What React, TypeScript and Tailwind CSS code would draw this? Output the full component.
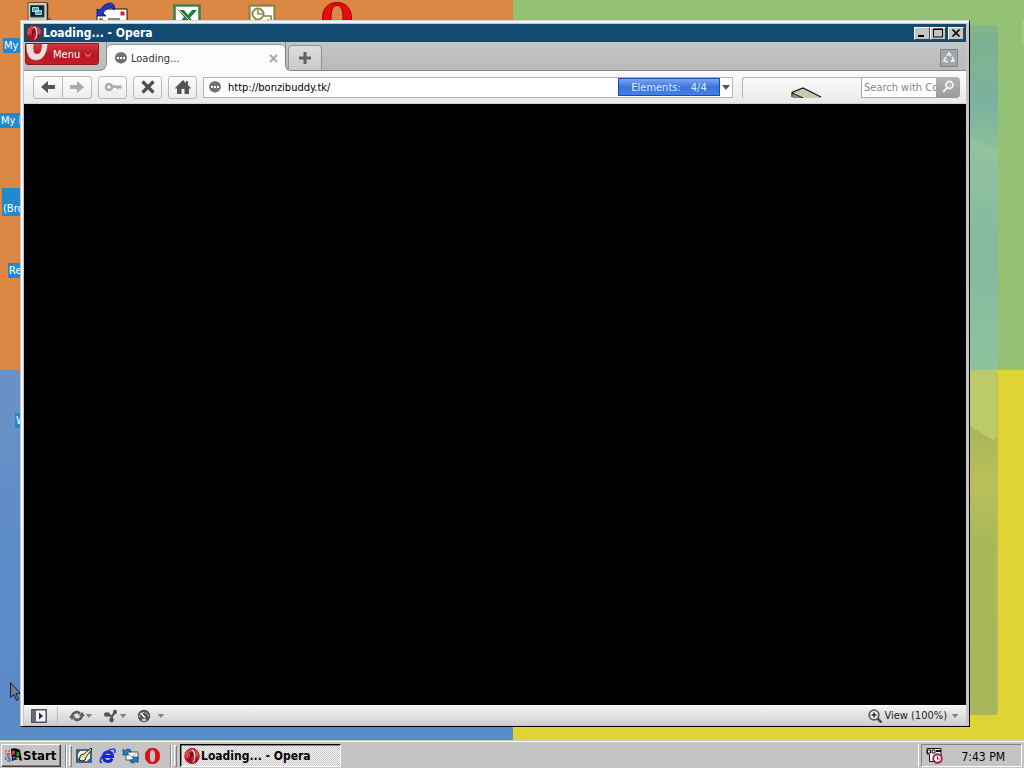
import type { ReactNode } from "react";

const ui = "font-['DejaVu_Sans_Condensed','DejaVu_Sans',sans-serif]";

function OperaO({ className }: { className: string }) {
  return (
    <svg viewBox="0 0 16 16" className={className} aria-hidden="true">
      <ellipse cx="8" cy="8" rx="7.7" ry="7.9" fill="#a5101a" />
      <path d="M1.500 5Q4 .5 8 .5q-3 2-3.500 7T2 10Q.5 8 1.500 5Z" fill="#dd4a4e" />
      <path d="M10 1q4 1 5 5l-1 4-2-2Q12 3 10 1Z" fill="#d44" />
      <ellipse cx="8.500" cy="8" rx="3" ry="6.400" fill="#f5e4e4" />
      <ellipse cx="7.800" cy="8.500" rx="2.200" ry="5.800" fill="#8c0a13" />
      <path d="M7 11l1.500-4 1 2-1 4Z" fill="#d5202a" />
    </svg>
  );
}

function OperaRing({ className }: { className: string }) {
  return (
    <svg viewBox="0 0 30 32" className={className} aria-hidden="true">
      <path
        fillRule="evenodd"
        d="M15 .5C6 .5 .5 7 .5 16S6 31.500 15 31.500 29.500 25 29.500 16 24 .5 15 .5ZM15 3.500c4.500 0 6 5 6 12.500s-1.500 12.500-6 12.500S9 23.500 9 16s1.500-12.500 6-12.500Z"
        fill="#e80c0c"
        stroke="#8e0404"
        strokeWidth="1"
      />
    </svg>
  );
}

function Bubble({ className }: { className: string }) {
  return (
    <svg viewBox="0 0 12 12" className={className} aria-hidden="true">
      <path d="M6 .3C9.800 .3 11.900 2.600 11.900 5.800S9.500 11 7 11.200L6 12l-1-.8C2.200 11 .1 9 .1 5.800S2.200.3 6 .3Z" fill="#727274" />
      <path d="M2 5h2v2H2zM5 5h2v2H5zM8 5h2v2H8z" fill="#fff" />
    </svg>
  );
}

function Caret({ className }: { className: string }) {
  return (
    <svg viewBox="0 0 8 5" className={className} aria-hidden="true">
      <path d="M0 0h8L4 5Z" fill="currentColor" />
    </svg>
  );
}

function Wallpaper() {
  return (
    <svg className="absolute inset-0 h-full w-full" viewBox="0 0 1024 740" preserveAspectRatio="none" aria-hidden="true">
      <defs>
        <linearGradient id="blue" x1="0" y1="0" x2="0" y2="1">
          <stop offset="0" stopColor="#6b92c6" />
          <stop offset="0.5" stopColor="#5c8bc8" />
          <stop offset="1" stopColor="#598bc8" />
        </linearGradient>
        <linearGradient id="panel" x1="0" y1="0" x2="0" y2="1">
          <stop offset="0" stopColor="#84b58c" />
          <stop offset="0.15" stopColor="#7baf92" />
          <stop offset="0.3" stopColor="#80b391" />
          <stop offset="0.6" stopColor="#79b1a0" />
          <stop offset="1" stopColor="#8fbf98" />
        </linearGradient>
        <linearGradient id="teal" x1="0" y1="0" x2="0" y2="1">
          <stop offset="0" stopColor="#94c3a0" />
          <stop offset="0.5" stopColor="#84b99f" />
          <stop offset="1" stopColor="#90c29d" />
        </linearGradient>
        <linearGradient id="olive" x1="0" y1="0" x2="0" y2="1">
          <stop offset="0" stopColor="#acb65a" />
          <stop offset="0.18" stopColor="#a9b657" />
          <stop offset="0.32" stopColor="#bac05b" />
          <stop offset="0.5" stopColor="#a8b859" />
          <stop offset="1" stopColor="#a9b65b" />
        </linearGradient>
      </defs>
      <path d="M0 0h513v370H0z" fill="#dc8844" />
      <path d="M513 0h511v370H513z" fill="#94c274" />
      <path d="M0 370h513v370H0z" fill="url(#blue)" />
      <path d="M513 370h511v370H513z" fill="#e0d434" />
      <path d="M1022 20h2v25h-2z" fill="#a3cb7d" />
      <path d="M960 25h34q4 0 4 4v121l-38-16z" fill="url(#panel)" />
      <path d="M960 134l38 16v220h-38z" fill="url(#teal)" />
      <path d="M960 370h38v340q0 5-4 5h-34z" fill="url(#olive)" />
      <path d="M960 370h38v65l-5 5-33-20z" fill="#bdca69" />
      <path d="M997 374v336" stroke="#c9b856" strokeWidth="1" />
    </svg>
  );
}

function DesktopIcons() {
  const label = `${ui} absolute bg-[#2389cf] text-[11px] leading-[15px] text-white whitespace-nowrap`;
  return (
    <>
      <svg className="absolute left-[27px] top-[2px] h-6 w-6" viewBox="0 0 24 24" aria-hidden="true">
        <path d="M1 .5h19.500v18H1z" fill="#d0ccb9" stroke="#57554c" />
        <path d="M20.500 1v18" stroke="#222" strokeWidth="1.500" />
        <path d="M3.500 3.500h13.500v11.500h-13.500z" fill="#08232f" stroke="#33555c" />
        <path d="M5 5h7v5H5zM8 8h7v5H8z" fill="#0a1a20" />
        <path d="M5.500 5.500h6v4h-6zM8.500 8.500h6v4h-6z" fill="#5c9fb4" stroke="#a6dcea" />
        <path d="M21 17h3v3" stroke="#333" fill="none" />
      </svg>
      <svg className="absolute left-[96px] top-[2px] h-6 w-8" viewBox="0 0 32 24" aria-hidden="true">
        <path d="M8 7h23v16H1V14z" fill="#fff" stroke="#111" />
        <path d="M24.500 9.500h4v4h-4z" fill="#d82020" />
        <path d="M12 17h12M3 17h4" stroke="#111" />
        <path d="M1 7v7h9l-3-3q3-5 8-6l3 3Q20 1 13 1 8 2 4 8Z" fill="#1c38d0" stroke="#061060" strokeWidth=".8" />
      </svg>
      <svg className="absolute left-[173px] top-[4px] h-6 w-7" viewBox="0 0 28 24" aria-hidden="true">
        <path d="M1.500 1.500h25v22h-25z" fill="#fff" stroke="#3d8249" strokeWidth="2.600" />
        <path d="M5 6h6l4 5 4-5h5l-7 8 6 7h-6l-4-5-4 5H4l7-8Z" fill="#277c3a" />
        <path d="M5 5l14 14" stroke="#fff" strokeWidth=".8" />
      </svg>
      <svg className="absolute left-[248px] top-[4px] h-6 w-7" viewBox="0 0 28 24" aria-hidden="true">
        <path d="M1.500 1.500h25v22h-25z" fill="#fff" stroke="#8f8748" strokeWidth="2.400" />
        <circle cx="10" cy="10" r="5.500" fill="#fff" stroke="#8f8748" strokeWidth="2" />
        <path d="M10 6v4h4M16 12h7v7h-3v-4" stroke="#8f8748" strokeWidth="1.600" fill="none" />
      </svg>
      <OperaRing className="absolute left-[322px] top-[2px] h-8 w-[30px]" />
      <span className={`${label} left-[3px] top-[38px] w-[30px] px-px`}>My</span>
      <span className={`${label} left-0 top-[113px] w-[30px] px-px`}>My D</span>
      <span className={`${label} left-[2px] top-[188px] w-[30px] px-px pt-[13px]`}>(Bro</span>
      <span className={`${label} left-[8px] top-[263px] w-[30px] px-px`}>Re</span>
      <span className={`${label} left-[15px] top-[413px] w-[30px] px-px`}>W</span>
    </>
  );
}

const raised = "border border-t-white border-l-white border-r-[#404040] border-b-[#404040] bg-[#c5c4c4]";

function TitleBar() {
  const box = `${raised} flex h-[13px] w-4 items-center justify-center`;
  return (
    <header className="flex h-[18px] shrink-0 items-center bg-[#124a71] px-0.5">
      <OperaO className="h-4 w-4" />
      <h1 className={`${ui} ml-px flex-1 text-[12px] leading-[16px] font-bold text-white`}>Loading... - Opera</h1>
      <button className={box} aria-label="Minimize">
        <svg viewBox="0 0 12 10" className="h-[10px] w-3"><path d="M2 7h6v2H2z" /></svg>
      </button>
      <button className={box} aria-label="Maximize">
        <svg viewBox="0 0 12 10" className="h-[10px] w-3"><path d="M1.500 1h9v8h-9zM1 1.500h10" fill="none" stroke="#000" /></svg>
      </button>
      <button className={`${box} ml-0.5`} aria-label="Close">
        <svg viewBox="0 0 12 10" className="h-[10px] w-3"><path d="M2.500 1.500l7 7M9.500 1.500l-7 7" stroke="#000" strokeWidth="1.700" /></svg>
      </button>
    </header>
  );
}

function TabBar() {
  return (
    <div className="flex h-[29px] shrink-0 bg-[#fcfcfc]">
      <div className="flex w-[83px] items-start rounded-br-lg border-r border-b border-[#8b8b8b] bg-linear-to-b from-[#c4c4c4] to-[#bdbdbd] pl-px pt-px">
        <button className={`${ui} flex h-[22px] w-[74px] items-start overflow-hidden rounded-b-[3px] border border-[#8e1820] bg-linear-to-b from-[#cf3b43] via-[#b91722] to-[#c31d29] text-[11px] leading-[22px] text-white`}>
          <svg viewBox="0 0 24 20" className="h-5 w-6 shrink-0" aria-hidden="true">
            <path d="M0 0Q0 16.500 10 16.500T22 0h-6q0 10-5 10T7.500 0Z" fill="#e9dfdf" />
            <path d="M0 0Q0 16.500 10 16.500T22 0" fill="none" stroke="#9b3339" strokeWidth=".6" />
          </svg>
          <span className="ml-[3px]">Menu</span>
          <svg viewBox="0 0 8 5" className="mt-[9px] ml-1 h-[5px] w-2" aria-hidden="true"><path d="M1 .5l3 3 3-3" fill="none" stroke="#f3b4b7" /></svg>
        </button>
      </div>
      <div className="w-[178px] bg-linear-to-b from-[#c4c4c4] from-40% to-[#fcfcfc] to-40% pt-0.5">
        <div className={`${ui} flex h-full items-center rounded-t-[5px] border-t border-[#969696] bg-[#fcfcfc] pr-[7px] pl-2 text-[11px] leading-4 text-[#333]`}>
          <Bubble className="h-3 w-3" />
          <span className="ml-1 flex-1 pt-px">Loading...</span>
          <button aria-label="Close tab">
            <svg viewBox="0 0 9 9" className="h-[9px] w-[9px]"><path d="M1 1l7 7M8 1L1 8" stroke="#a4a4a4" strokeWidth="1.800" /></svg>
          </button>
        </div>
      </div>
      <div className="flex flex-1 justify-between rounded-bl-md border-b border-l border-[#858585] bg-linear-to-b from-[#c4c4c4] to-[#bababa] pl-0.5">
        <button aria-label="New tab" className="mt-[3px] flex h-[25px] w-[34px] items-center justify-center rounded-t-[4px] border border-b-0 border-[#919191] bg-linear-to-b from-[#dedede] to-[#c9c9c9]">
          <svg viewBox="0 0 12 12" className="h-3 w-3"><path d="M4.500 0h3v4.500H12v3H7.500V12h-3V7.500H0v-3h4.500Z" fill="#616166" /></svg>
        </button>
        <button aria-label="Closed tabs" className="mt-[7px] mr-2 flex h-[18px] w-[18px] items-center justify-center border border-[#7b858a] bg-[#9da7ac]">
          <svg viewBox="0 0 12 12" className="h-3 w-3"><path d="M4 4l2-3 2 3M9 5l2 4H8M5 10L1 9l2-4" fill="none" stroke="#edf2f2" strokeWidth="1.800" strokeLinejoin="round" /></svg>
        </button>
      </div>
    </div>
  );
}

function ToolButton({ label, className, children }: { label: string; className: string; children: ReactNode }) {
  return (
    <button aria-label={label} className={`flex h-[23px] items-center justify-center border border-[#b9b9b9] bg-linear-to-b from-white to-[#ececec] ${className}`}>
      {children}
    </button>
  );
}

function AddressBar() {
  const icon = "h-4 w-4";
  return (
    <div className="flex h-[33px] shrink-0 items-center border-b border-[#d2d2d2] bg-linear-to-b from-[#fcfcfc] to-[#e9e9e9] pr-1.5 pl-[9px]">
      <ToolButton label="Back" className="w-[30px] rounded-l-[3px]">
        <svg viewBox="0 0 16 16" className={icon}><path d="M1 8l7-6v4h7v4H8v4Z" fill="#555558" /></svg>
      </ToolButton>
      <ToolButton label="Forward" className="-ml-px w-[30px] rounded-r-[3px]">
        <svg viewBox="0 0 16 16" className={icon}><path d="M15 8L8 2v4H1v4h7v4Z" fill="#aaaaac" /></svg>
      </ToolButton>
      <ToolButton label="Password" className="ml-1.5 w-[29px] rounded-[3px]">
        <svg viewBox="0 0 18 12" className="h-3 w-[18px]">
          <circle cx="5" cy="6" r="3" fill="none" stroke="#aaa" strokeWidth="2.600" />
          <path d="M8 4.500h9l1 1.500-1.500 2-1.500-1-1 2-1.500-2H8Z" fill="#aaa" />
        </svg>
      </ToolButton>
      <ToolButton label="Stop" className="ml-1.5 w-[29px] rounded-[3px]">
        <svg viewBox="0 0 16 16" className={icon}><path d="M2.500 2.500l11 11M13.500 2.500l-11 11" stroke="#505053" strokeWidth="3.200" /></svg>
      </ToolButton>
      <ToolButton label="Home" className="ml-1.5 w-[29px] rounded-[3px]">
        <svg viewBox="0 0 16 16" className={icon}><path d="M8 1l3 3V2h2v4l3 3-1 1-1-1v6H9.500v-5h-3v5H2V9l-1 1-1-1Z" fill="#555558" /></svg>
      </ToolButton>
      <div className="ml-1.5 flex h-[21px] w-[530px] items-center border border-[#b2b2b2] bg-white pl-[5px]">
        <Bubble className="h-3 w-3 shrink-0" />
        <input aria-label="Address" defaultValue="http://bonzibuddy.tk/" className={`${ui} ml-[7px] min-w-0 flex-1 pt-0.5 text-[11px] leading-4 text-black outline-none`} />
        <div className={`${ui} flex h-[18px] w-[102px] shrink-0 items-center justify-center gap-2.5 border border-[#184baa] bg-linear-to-b from-[#7aa8f2] via-[#3d72df] to-[#4381e8] pt-0.5 text-[11px] leading-4 text-[#d8f1ff]`}>
          <span>Elements:</span>
          <span>4/4</span>
        </div>
        <button aria-label="Address history" className="flex w-3 shrink-0 justify-center text-[#555]"><Caret className="h-[5px] w-2" /></button>
      </div>
      <div className="ml-[9px] flex h-[21px] flex-1 items-end rounded-tl-[3px] border-t border-l border-[#b5b5b5] bg-linear-to-b from-[#fafafa] to-[#ededed] pl-12">
        <svg viewBox="0 0 32 11" className="h-[11px] w-8" aria-hidden="true">
          <path d="M1 11V5L12 1l18 9v1H1" fill="#ccc9b0" />
          <path d="M1 10V5.500L12 1l18 9M1 6l11 5" fill="none" stroke="#151510" strokeWidth="1.200" />
          <path d="M2 7l9 4H2Z" fill="#8b8979" />
        </svg>
      </div>
      <input aria-label="Search" placeholder="Search with Co" className={`${ui} h-[21px] w-[75px] border border-r-0 border-[#aaa] bg-white pl-0.5 text-[11px] text-[#777] outline-none placeholder:text-[#858585]`} />
      <button aria-label="Search" className="flex h-[21px] w-6 items-center justify-center rounded-r-[4px] bg-linear-to-b from-[#b5b5b5] to-[#999]">
        <svg viewBox="0 0 14 14" className="h-[14px] w-[14px]"><circle cx="8.500" cy="5" r="3.500" fill="#b5b5b5" stroke="#f1f1f1" strokeWidth="1.800" /><path d="M6 8l-4 4" stroke="#f1f1f1" strokeWidth="2" /></svg>
      </button>
    </div>
  );
}

function StatusBar() {
  return (
    <footer className={`${ui} flex h-5 shrink-0 items-center border-t border-white bg-linear-to-b from-[#f3f3f3] to-[#cfcfcf] px-[7px] text-[11px] leading-4 text-[#222]`}>
      <button aria-label="Panels">
        <svg viewBox="0 0 16 14" className="h-[14px] w-4"><path d="M.8.8h14.400v12.400H.8Z" fill="#f6f6f6" stroke="#4c505a" strokeWidth="1.500" /><path d="M1 1h4v12H1Z" fill="#646976" /><path d="M8 3.500v7l4-3.500Z" fill="#222d4a" /></svg>
      </button>
      <span className="ml-2.5 h-full w-px bg-[#bcbcbc]" />
      <button aria-label="Synchronize" className="ml-[11px] flex items-center text-[#808080]">
        <svg viewBox="0 0 16 12" className="h-3 w-4"><path d="M3 6Q4 2 9 2l2 2M13 6q-1 4-6 4L5 8" fill="none" stroke="#555f5d" strokeWidth="2.600" /><path d="M0 6h6L3 10ZM16 6h-6l3-4Z" fill="#555f5d" /></svg>
        <Caret className="h-1 w-2" />
      </button>
      <button aria-label="Unite" className="ml-2.5 flex items-center text-[#808080]">
        <svg viewBox="0 0 16 14" className="h-[14px] w-4">
          <path d="M10 7q0-2 2-4M8 11l1-4-5-1" stroke="#505456" strokeWidth="2" fill="none" />
          <ellipse cx="4" cy="5.500" rx="3" ry="2.200" fill="#505456" />
          <ellipse cx="12" cy="3" rx="2" ry="2.300" fill="#505456" />
          <ellipse cx="8.500" cy="11" rx="2.300" ry="2.400" fill="#505456" />
        </svg>
        <Caret className="h-1 w-2" />
      </button>
      <button aria-label="Turbo" className="ml-2.5 flex items-center text-[#808080]">
        <svg viewBox="0 0 14 14" className="h-[14px] w-[14px]"><circle cx="7" cy="7" r="6.200" fill="#505661" /><path d="M2.500 8A4.500 4.500 0 0 1 11.500 8" fill="none" stroke="#d2d5db" strokeWidth="1.200" strokeDasharray="1.600 1.200" /><path d="M4 4l4 5M5 11h4" stroke="#fff" strokeWidth="1.500" /></svg>
        <Caret className="ml-1.5 h-1 w-2" />
      </button>
      <button className="ml-auto flex items-center whitespace-nowrap">
        <svg viewBox="0 0 14 14" className="mr-0.5 h-[14px] w-[14px]" aria-hidden="true"><circle cx="6" cy="6" r="4.800" fill="#eef0f2" stroke="#575d65" strokeWidth="1.800" /><path d="M9.500 9.500l4 4" stroke="#474d55" strokeWidth="2.600" /><path d="M3.500 6h5M6 3.500v5" stroke="#333" strokeWidth="1.600" /></svg>
        <span className="pt-px">View (100%)</span>
        <Caret className="ml-1 h-1 w-2 text-[#808080]" />
      </button>
    </footer>
  );
}

function BrowserWindow() {
  return (
    <section className="absolute top-5 right-[54px] bottom-[13px] left-5 flex flex-col border border-t-[#d8d8d0] border-r-black border-b-black border-l-[#c6c6c6] bg-[#c5c4c4]">
      <div className="flex min-h-0 flex-1 flex-col border-t-2 border-l-2 border-t-[#f3f3f3] border-l-[#f3f3f3] pt-px pr-[3px] pb-px pl-px">
        <TitleBar />
        <TabBar />
        <AddressBar />
        <main className="min-h-0 flex-1 bg-black" />
        <StatusBar />
      </div>
    </section>
  );
}

function Grip() {
  return (
    <span className="flex h-[22px] gap-0.5" aria-hidden="true">
      <span className="w-0.5 border-r border-l border-r-white border-l-[#888]" />
      <span className="w-[3px] border border-t-white border-r-[#808080] border-b-[#808080] border-l-white" />
    </span>
  );
}

function Taskbar() {
  return (
    <nav className={`${ui} flex h-7 shrink-0 items-center border-t border-[#c5c4c4] bg-[#c5c4c4] pt-0.5 pr-0.5 pl-px text-[12px] leading-4 text-black shadow-[inset_0_1px_0_#fff]`}>
      <button className={`${raised} flex h-[23px] w-[60px] items-center gap-px pl-[3px] text-[13px] font-bold shadow-[inset_-1px_-1px_0_#808080]`}>
        <svg viewBox="0 0 17 15" className="h-[15px] w-[17px] shrink-0" aria-hidden="true">
          <path d="M6 1q4-2 9 1l2 11q-5-3-10 0Z" fill="#080808" />
          <path d="M7 3q2-1 3 0v4q-1-1-3 0Z" fill="#df3926" />
          <path d="M11.500 3.500q1 1 2.500.5l.5 4q-2 1-3 0Z" fill="#27953d" />
          <path d="M7.500 8.500q2-1 3 0v3q-1-1-3 0Z" fill="#2d54d1" />
          <path d="M11.500 9q1 1 2.500.5l.5 2q-1 .5-3-.5Z" fill="#ecd636" />
          <path d="M0 3h2M3 3h2M0 5h1M2 5.500h3M1 7h4" stroke="#c82d20" strokeWidth="1.200" />
          <path d="M0 9h1M2 9h3M0 11h2M3 11h3M2 13h4" stroke="#2b3aa0" strokeWidth="1.200" />
        </svg>
        Start
      </button>
      <span className="ml-1"><Grip /></span>
      <div className="ml-1 flex items-center gap-1.5">
        <button aria-label="Show desktop">
          <svg viewBox="0 0 17 16" className="h-4 w-[17px]"><path d="M1 2h14v12H1Z" fill="#edf5e8" stroke="#164269" strokeWidth="1.600" /><path d="M1 2h4L1 7ZM1 14V9l5 5ZM15 14v-5l-5 5Z" fill="#256ba0" /><path d="M15 0L8 6q-4 0-4 3l-1 3 3 1q4 0 4-4l6-8Z" fill="#eee6af" stroke="#24241b" /></svg>
        </button>
        <button aria-label="Internet Explorer">
          <svg viewBox="0 0 17 16" className="h-4 w-[17px]"><path d="M13 10.500Q12 13.500 9 13.500 4.500 13.500 4.500 8.800T9 4q4.500 0 4.500 4.500H5" fill="none" stroke="#1424ce" strokeWidth="3" /><path d="M3 15Q-1 14 4 7 10 1 14 1q3 0 1.500 4" fill="none" stroke="#2836e0" strokeWidth="1.600" /></svg>
        </button>
        <button aria-label="Outlook Express">
          <svg viewBox="0 0 17 16" className="h-4 w-[17px]"><path d="M4 4h12v8H4Z" fill="#fff" stroke="#555" /><path d="M4 4l6 5 6-5" fill="none" stroke="#b3a97a" /><path d="M1 1v6h6L5 5q2-2 4-1 0-3-3-3-2 0-3 2ZM16 15V9h-6l2 2q-2 2-4 1 0 3 3 3 2 0 3-2Z" fill="#1f7dd0" stroke="#103974" strokeWidth=".7" /></svg>
        </button>
        <button aria-label="Opera"><OperaRing className="h-4 w-[15px]" /></button>
      </div>
      <span className="ml-2.5"><Grip /></span>
      <button className="ml-[3px] flex h-[23px] w-[161px] items-center border border-t-black border-r-white border-b-white border-l-black bg-[repeating-conic-gradient(#fff_0_25%,#c5c4c4_0_50%)] bg-size-[2px_2px] pl-[3px] font-bold shadow-[inset_1px_1px_0_#808080]">
        <OperaO className="h-4 w-4" />
        <span className="ml-px pt-px">Loading... - Opera</span>
      </button>
      <span className="mr-0.5 ml-auto h-[23px] w-px bg-white" />
      <div className="flex h-[23px] w-[101px] items-center justify-between border border-t-[#848284] border-r-white border-b-white border-l-[#848284] pr-4 pl-1">
        <svg viewBox="0 0 17 16" className="h-4 w-[17px]" aria-hidden="true"><path d="M1 .5h14v13H3.500V6H1Z" fill="#f6f6f6" stroke="#161616" /><path d="M1.500 2h3v3h-3zM6 2h3v3H6z" fill="#fff" stroke="#111" /><path d="M10 3h5" stroke="#111" strokeWidth="2" /><circle cx="11.500" cy="10.500" r="4.200" fill="#fff" stroke="#a31942" strokeWidth="1.900" /><path d="M11.500 8v3h2" stroke="#a31942" strokeWidth="1.200" fill="none" /></svg>
        <time className="pt-0.5">7:43 PM</time>
      </div>
    </nav>
  );
}

export default function App() {
  return (
    <div className="flex h-screen flex-col overflow-hidden">
      <div className="relative min-h-0 flex-1 overflow-hidden">
        <Wallpaper />
        <DesktopIcons />
        <svg className="absolute left-[10px] top-[682px] h-5 w-3" viewBox="0 0 12 20" aria-hidden="true">
          <path d="M.5.500v15l3.500-3 2.500 6 2-1-2.500-6h4.500Z" fill="#737f90" stroke="#17202d" />
        </svg>
        <BrowserWindow />
      </div>
      <Taskbar />
    </div>
  );
}
